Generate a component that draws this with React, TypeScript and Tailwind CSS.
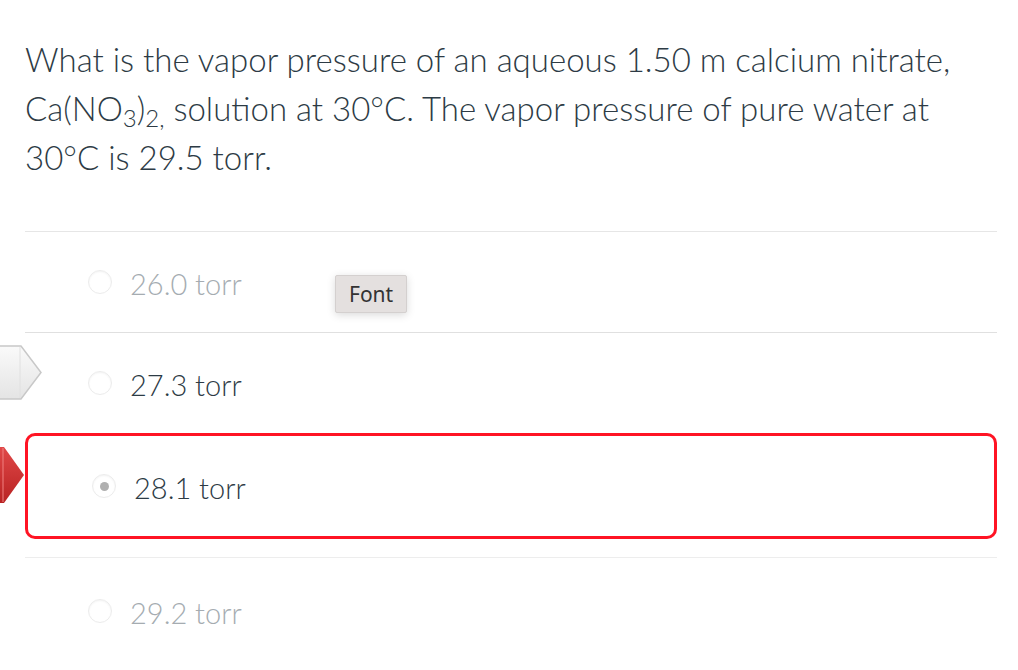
import React from "react";

type Answer = { label: string; faded?: boolean; selected?: boolean };

const answers: Answer[] = [
  { label: "26.0 torr", faded: true },
  { label: "27.3 torr" },
  { label: "28.1 torr", selected: true },
  { label: "29.2 torr", faded: true },
];

function Radio({ selected }: { selected?: boolean }) {
  return (
    <span className="flex h-[24px] w-[24px] shrink-0 items-center justify-center rounded-full border border-[#ececec] bg-white shadow-[inset_0_1px_2px_rgba(0,0,0,0.05)]">
      {selected && <span className="h-[9px] w-[9px] rounded-full bg-[#b0b0b0]" />}
    </span>
  );
}

function Choice({ a }: { a: Answer }) {
  return (
    <div className="flex items-center gap-[18px]">
      <Radio selected={a.selected} />
      <span className={"pt-[4px] " + (a.faded ? "text-[#a5acb1]" : "text-[#2d3b45]")}>{a.label}</span>
    </div>
  );
}

export default function App() {
  return (
    <div
      className="relative min-h-screen w-[1018px] bg-white text-[#2d3b45]"
      style={{ fontFamily: "Lato, 'Open Sans', sans-serif" }}
    >
      {/* pointer arrows on the left edge */}
      <svg className="absolute left-0 top-[345px]" width="43" height="55" viewBox="0 0 43 55">
        <defs>
          <linearGradient id="g1" x1="0" y1="0" x2="0" y2="1">
            <stop offset="0" stopColor="#fafafa" />
            <stop offset="1" stopColor="#e4e4e4" />
          </linearGradient>
        </defs>
        <path d="M-2 1 H21 L41 27.5 L21 54 H-2 Z" fill="url(#g1)" stroke="#c8c8c8" strokeWidth="1.5" />
        <line x1="20" y1="2" x2="20" y2="53" stroke="#e0e0e0" strokeWidth="1" />
      </svg>
      <svg className="absolute left-0 top-[447px]" width="26" height="56" viewBox="0 0 26 56">
        <defs>
          <linearGradient id="g2" x1="0" y1="0" x2="0" y2="1">
            <stop offset="0" stopColor="#e04848" />
            <stop offset="1" stopColor="#b82222" />
          </linearGradient>
        </defs>
        <path d="M-2 0 H4 L24 28 L4 56 H-2 Z" fill="url(#g2)" />
        <line x1="3" y1="1" x2="3" y2="55" stroke="#f08080" strokeWidth="1" />
      </svg>

      <div className="ml-[25px] w-[972px]">
        <p className="pt-[35px] pb-[49px] text-[33px] font-light leading-[49px]">
          What is the vapor pressure of an aqueous 1.50 m calcium nitrate,
          <br />
          Ca(NO<sub className="text-[24px] leading-none">3</sub>)<sub className="text-[24px] leading-none">2,</sub> solution at 30°C. The vapor pressure of pure water at
          <br />
          30°C is 29.5 torr.
        </p>

        <div className="text-[29px] font-light">
          <div className="relative flex h-[101px] items-center border-t border-[#e6e6e6] pl-[63px]">
            <Choice a={answers[0]} />
            <div className="absolute left-[310px] top-[43px] rounded-[2px] border border-[#d4d0cf] bg-[#e4e0df] px-[13px] py-[5px] text-[21px] font-normal leading-[26px] text-[#333] shadow-[0_2px_8px_rgba(0,0,0,0.15)]" style={{ fontFamily: "'Noto Sans', sans-serif" }}>
              Font
            </div>
          </div>
          <div className="flex h-[101px] items-center border-t border-[#e0e0e0] pl-[63px]">
            <Choice a={answers[1]} />
          </div>
          <div className="flex h-[106px] items-center rounded-[10px] border-[3px] border-[#ff1424] pl-[64px]">
            <Choice a={answers[2]} />
          </div>
          <div className="mt-[18px] flex h-[106px] items-center border-t border-[#ededed] pl-[63px]">
            <Choice a={answers[3]} />
          </div>
        </div>
      </div>
    </div>
  );
}
